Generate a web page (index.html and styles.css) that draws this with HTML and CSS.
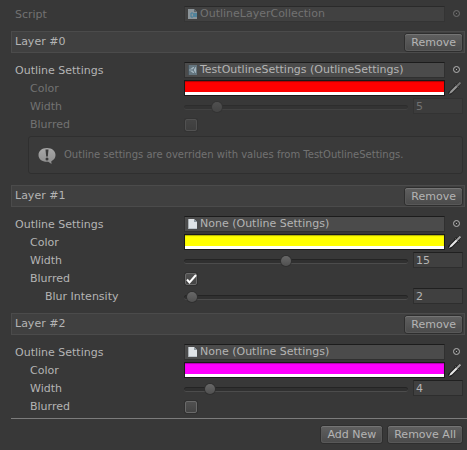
FILE: index.html
```html
<!DOCTYPE html>
<html lang="en">
<head>
<meta charset="utf-8">
<title>Outline Layer Collection</title>
<link rel="stylesheet" href="styles.css">
</head>
<body>
<svg class="defs" aria-hidden="true">
  <defs>
    <linearGradient id="bubble" x1="0" y1="0" x2="0" y2="1">
      <stop offset="0" stop-color="#a8a8a8"/><stop offset="1" stop-color="#8c8c8c"/>
    </linearGradient>
    <symbol id="file" viewBox="0 0 12 12">
      <path d="M1 1h6l3 3v7H1z" fill="#dfe3e6"/>
      <path d="M1 1h1v10H1z" fill="#aab0b5"/>
      <path d="M7 1v3h3z" fill="#8f9aa1"/>
      <path d="M2 10h8v1H2z" fill="#bcc3c8"/>
    </symbol>
    <symbol id="script-file" viewBox="0 0 12 12">
      <path d="M1 1h6l3 3v7H1z" fill="#8b9499"/>
      <path d="M7 1v3h3z" fill="#5c666c"/>
      <path d="M6 5H4v4h2M6 6h4M6 8h4M7 5v4M9 5v4" fill="none" stroke="#3f7f9c"/>
    </symbol>
    <symbol id="asset" viewBox="0 0 12 12">
      <path d="M1 1h9v10H1z" fill="#64757f"/>
      <path d="M1 1h1v10H1z" fill="#47535b"/>
      <path d="M2 6l4-3h3v6H6z" fill="#a3b4be"/>
      <path d="M3 6h3l2-3M6 6l2 3" fill="none" stroke="#5a6d78"/>
    </symbol>
    <symbol id="target" viewBox="0 0 9 9">
      <circle cx="4.5" cy="4.5" r="3" fill="none" stroke="currentColor"/>
      <path d="M4 4h1v1H4z" fill="currentColor"/>
    </symbol>
    <symbol id="dropper" viewBox="0 0 14 14">
      <path d="M1 13L9 5" stroke="#1c1c1c" stroke-width="4"/>
      <path d="M7 3l4 4M8 6l4.500-4.500" stroke="#1c1c1c" stroke-width="3"/>
      <path d="M1 13l1.500-3L8 4.500l1.500 1.500L4 11.500z" fill="#e8e8e8"/>
      <path d="M7.500 3.500l3 3" stroke="#8a8a8a"/>
      <path d="M9 5l3.500-3.500" stroke="#a5a5a5" stroke-width="2"/>
    </symbol>
  </defs>
</svg>
<main class="inspector">
  <div class="row script-row disabled">
    <label for="script">Script</label>
    <div class="control">
      <button id="script" class="object" disabled><svg class="thumb"><use href="#script-file"/></svg>OutlineLayerCollection</button>
      <button class="pick" aria-label="Select script" disabled><svg><use href="#target"/></svg></button>
    </div>
  </div>

  <section>
    <header class="layer"><h2>Layer #0</h2><button class="btn">Remove</button></header>
    <div class="rows">
      <div class="row">
        <label for="set0">Outline Settings</label>
        <div class="control">
          <button id="set0" class="object"><svg class="thumb"><use href="#asset"/></svg>TestOutlineSettings (OutlineSettings)</button>
          <button class="pick" aria-label="Select settings"><svg><use href="#target"/></svg></button>
        </div>
      </div>
      <div class="row sub disabled">
        <label for="col0">Color</label>
        <div class="control">
          <input id="col0" type="color" value="#ff0000" disabled>
          <button class="dropper" aria-label="Pick color" disabled><svg><use href="#dropper"/></svg></button>
        </div>
      </div>
      <div class="row sub disabled">
        <label for="w0">Width</label>
        <div class="control">
          <input id="w0" type="range" min="1" max="32" value="5" disabled>
          <input class="num" type="text" value="5" aria-label="Width value" disabled>
        </div>
      </div>
      <div class="row sub disabled">
        <label for="b0">Blurred</label>
        <div class="control"><input id="b0" type="checkbox" disabled></div>
      </div>
      <div class="help">
        <svg viewBox="0 0 18 17" aria-hidden="true">
          <path d="M9 1c5 0 8.500 2.800 8.500 7 0 2.800-1.500 5-4.200 6.200L13.500 17l-3.300-2.200C4.500 15.300.5 12.500.5 8 .5 3.800 4 1 9 1z" fill="url(#bubble)"/>
          <path d="M7.500 2.500h3L9.800 9.500H8.200z" fill="#383838"/>
          <circle cx="9" cy="12" r="1.500" fill="#383838"/>
        </svg>
        <p>Outline settings are overriden with values from TestOutlineSettings.</p>
      </div>
    </div>
  </section>

  <section>
    <header class="layer"><h2>Layer #1</h2><button class="btn">Remove</button></header>
    <div class="rows">
      <div class="row">
        <label for="set1">Outline Settings</label>
        <div class="control">
          <button id="set1" class="object"><svg class="thumb"><use href="#file"/></svg>None (Outline Settings)</button>
          <button class="pick" aria-label="Select settings"><svg><use href="#target"/></svg></button>
        </div>
      </div>
      <div class="row sub">
        <label for="col1">Color</label>
        <div class="control">
          <input id="col1" type="color" value="#ffff00">
          <button class="dropper" aria-label="Pick color"><svg><use href="#dropper"/></svg></button>
        </div>
      </div>
      <div class="row sub">
        <label for="w1">Width</label>
        <div class="control">
          <input id="w1" type="range" min="1" max="32" value="15">
          <input class="num" type="text" value="15" aria-label="Width value">
        </div>
      </div>
      <div class="row sub">
        <label for="b1">Blurred</label>
        <div class="control"><input id="b1" type="checkbox" checked><svg class="tick" viewBox="0 0 12 12" aria-hidden="true"><path d="M2 6.500L4.500 9.500 11 2" fill="none" stroke="#fff" stroke-width="2"/></svg></div>
      </div>
      <div class="row sub2">
        <label for="i1">Blur Intensity</label>
        <div class="control">
          <input id="i1" type="range" min="1" max="64" value="2">
          <input class="num" type="text" value="2" aria-label="Blur intensity value">
        </div>
      </div>
    </div>
  </section>

  <section>
    <header class="layer"><h2>Layer #2</h2><button class="btn">Remove</button></header>
    <div class="rows last">
      <div class="row">
        <label for="set2">Outline Settings</label>
        <div class="control">
          <button id="set2" class="object"><svg class="thumb"><use href="#file"/></svg>None (Outline Settings)</button>
          <button class="pick" aria-label="Select settings"><svg><use href="#target"/></svg></button>
        </div>
      </div>
      <div class="row sub">
        <label for="col2">Color</label>
        <div class="control">
          <input id="col2" type="color" value="#ff00ff">
          <button class="dropper" aria-label="Pick color"><svg><use href="#dropper"/></svg></button>
        </div>
      </div>
      <div class="row sub">
        <label for="w2">Width</label>
        <div class="control">
          <input id="w2" type="range" min="1" max="32" value="4">
          <input class="num" type="text" value="4" aria-label="Width value">
        </div>
      </div>
      <div class="row sub">
        <label for="b2">Blurred</label>
        <div class="control"><input id="b2" type="checkbox"></div>
      </div>
    </div>
  </section>

  <footer>
    <button class="btn">Add New</button>
    <button class="btn">Remove All</button>
  </footer>
</main>
</body>
</html>
```
FILE: styles.css
```css
* { box-sizing: border-box; }

body {
  margin: 0;
  background: #383838;
  color: #b4b4b4;
  font: 11px/18px "DejaVu Sans", sans-serif;
}

button, input {
  margin: 0;
  padding: 0;
  border: 0;
  background: none;
  color: inherit;
  font: inherit;
}

svg { display: block; }
.defs { position: absolute; width: 0; height: 0; }

.inspector { padding: 6px 0 0 11px; }

.row {
  display: grid;
  grid-template-columns: 169px 1fr;
  height: 16px;
}
.script-row { margin: 0 4px 9px; }
.sub label { padding-left: 15px; }
.sub2 label { padding-left: 30px; }
.disabled { color: #727272; }

.control { display: flex; position: relative; min-width: 0; height: 16px; }

.layer {
  display: flex;
  align-items: flex-start;
  justify-content: space-between;
  height: 22px;
  margin-right: 2px;
  padding: 2px 2px 0 3px;
  border: 1px solid #4b4b4b;
  background: #404040;
}
h2 { margin: 0; font: inherit; line-height: 16px; }

.rows {
  display: grid;
  gap: 2px;
  padding: 9px 4px;
}
.rows.last { padding-bottom: 4px; }

.object {
  display: flex;
  flex: 1;
  align-items: center;
  gap: 1px;
  min-width: 0;
  height: 16px;
  margin-right: 6px;
  padding-left: 2px;
  border: 1px solid #303030;
  border-top-color: #1c1c1c;
  background: #4b4b4b;
  line-height: 14px;
  white-space: nowrap;
}
.disabled .object { border-color: #343434; border-top-color: #2a2a2a; background: #414141; }
.thumb { flex: none; width: 12px; height: 12px; }

.pick { width: 12px; height: 16px; }
.pick svg { width: 9px; height: 9px; margin: 0 1px 1px; }

input[type="color"] {
  appearance: none;
  flex: 1;
  min-width: 0;
  height: 16px;
  margin-right: 2px;
  border: 1px solid #1a1a1a;
}
input[type="color"]::-webkit-color-swatch-wrapper { padding: 0; }
input[type="color"]::-webkit-color-swatch {
  border: 0;
  border-bottom: 3px solid #fff;
  border-radius: 0;
  box-shadow: inset 0 1px 1px rgba(0, 0, 0, 0.3);
}
.dropper { width: 16px; height: 16px; }
.dropper svg { width: 14px; height: 14px; margin: 0 1px; }
.disabled .dropper { opacity: 0.55; }

input[type="range"] {
  appearance: none;
  flex: 1;
  min-width: 0;
  height: 18px;
  margin-right: 5px;
}
input[type="range"]::-webkit-slider-runnable-track {
  height: 5px;
  border-top: 1px solid #242424;
  border-bottom: 1px solid #4c4c4c;
  border-radius: 3px;
  background: #303030;
}
input[type="range"]::-webkit-slider-thumb {
  appearance: none;
  width: 10px;
  height: 10px;
  margin-top: -4px;
  border-radius: 50%;
  background: linear-gradient(#686868, #505050);
  box-shadow: 0 0 0 1px #303030;
}
.disabled input[type="range"] { opacity: 0.5; }

.num {
  width: 50px;
  height: 16px;
  padding: 0 2px;
  border: 1px solid #2e2e2e;
  border-top-color: #202020;
  background: #404040;
  line-height: 14px;
}
.disabled .num { border-color: #333; background: #3c3c3c; }

input[type="checkbox"] {
  appearance: none;
  width: 12px;
  height: 12px;
  margin: 3px 1px;
  border: 1px solid #6a6a6a;
  border-radius: 2px;
  background: linear-gradient(#505050, #444);
  box-shadow: 0 0 0 1px #303030;
}
.disabled input[type="checkbox"] { opacity: 0.5; }
.tick { position: absolute; top: 3px; left: 1px; width: 12px; height: 12px; pointer-events: none; }

.help {
  display: flex;
  align-items: center;
  gap: 8px;
  height: 38px;
  margin: 2px 0 2px 13px;
  padding-left: 9px;
  border: 1px solid #2f2f2f;
  border-radius: 3px;
  background: #3a3a3a;
  color: #727272;
  font-size: 10px;
}
.help svg { flex: none; width: 18px; height: 17px; }
.help p { margin: 0; }

.btn {
  height: 17px;
  padding: 0 6px;
  border-radius: 3px;
  background: linear-gradient(#606060, #4a4a4a);
  box-shadow: inset 0 1px #747474, inset 0 0 0 1px #585858, 0 0 0 1px #2e2e2e;
  line-height: 16px;
}

footer {
  display: flex;
  justify-content: flex-end;
  gap: 6px;
  padding: 7px 5px;
  border-top: 1px solid #7c7c7c;
}
```
